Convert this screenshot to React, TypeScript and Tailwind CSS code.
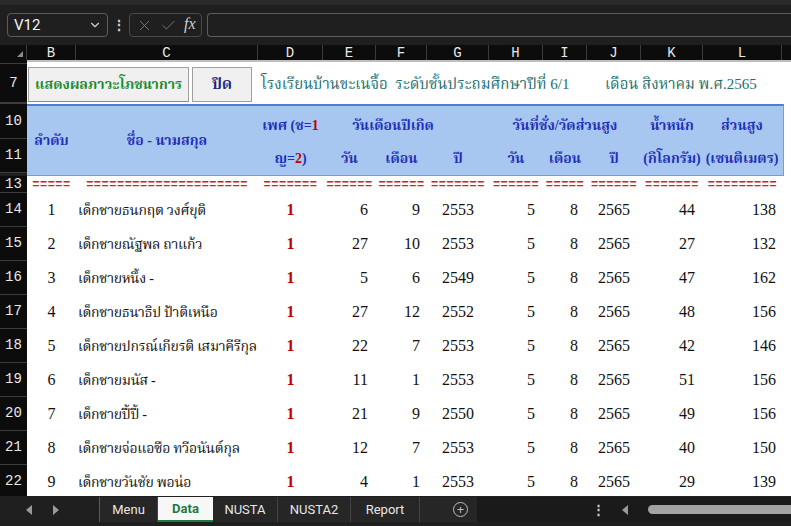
import { Check, ChevronDown, X } from "lucide-react";

const COLS =
  "grid grid-cols-[49px_182px_65px_53px_51px_62px_54px_44px_54px_62px_79px_1fr]";
const HEAD_COLS =
  "grid grid-cols-[49px_182px_65px_53px_51px_62px_54px_44px_54px_62px_78px]";

const SERIF = "font-['Liberation_Serif','Noto_Serif_Thai','Noto_Sans_Thai',serif]";
const MONO = "font-['Liberation_Mono',monospace]";
const UI = "font-['Roboto','Noto_Sans',sans-serif]";

const letters = [
  { l: "B", w: "w-[49px]" },
  { l: "C", w: "w-[182px]" },
  { l: "D", w: "w-[65px]" },
  { l: "E", w: "w-[53px]" },
  { l: "F", w: "w-[51px]" },
  { l: "G", w: "w-[62px]" },
  { l: "H", w: "w-[54px]" },
  { l: "I", w: "w-[44px]" },
  { l: "J", w: "w-[54px]" },
  { l: "K", w: "w-[62px]" },
  { l: "L", w: "w-[79px]" },
];

const students = [
  { no: 1, name: "เด็กชายธนกฤต วงศ์ยุติ", d: 6, m: 9, y: 2553, kg: 44, cm: 138 },
  { no: 2, name: "เด็กชายณัฐพล ถาแก้ว", d: 27, m: 10, y: 2553, kg: 27, cm: 132 },
  { no: 3, name: "เด็กชายหนึ้ง -", d: 5, m: 6, y: 2549, kg: 47, cm: 162 },
  { no: 4, name: "เด็กชายธนาธิป ป้าติเหนือ", d: 27, m: 12, y: 2552, kg: 48, cm: 156 },
  { no: 5, name: "เด็กชายปกรณ์เกียรติ เสมาคีรีกุล", d: 22, m: 7, y: 2553, kg: 42, cm: 146 },
  { no: 6, name: "เด็กชายมนัส -", d: 11, m: 1, y: 2553, kg: 51, cm: 156 },
  { no: 7, name: "เด็กชายปี้ปี้ -", d: 21, m: 9, y: 2550, kg: 49, cm: 156 },
  { no: 8, name: "เด็กชายจ่อแอซือ ทวีอนันต์กุล", d: 12, m: 7, y: 2553, kg: 40, cm: 150 },
  { no: 9, name: "เด็กชายวันชัย พอน่อ", d: 4, m: 1, y: 2553, kg: 29, cm: 139 },
];

const dashes = [5, 21, 7, 6, 6, 7, 6, 5, 6, 7, 9];

function RowNum({ n, h }: { n?: string; h: string }) {
  return (
    <div
      className={`${h} w-[27px] shrink-0 bg-[#0c0c0c] border-b border-[#3c3c3c] flex items-center justify-center ${MONO} text-[14px] text-[#e8e8e8]`}
    >
      {n}
    </div>
  );
}

function TopBar() {
  return (
    <div className="h-[45px] bg-[#1f1f1f] border-t-[5px] border-[#2a2a2a] relative">
      <div className="flex items-center h-[24px] mt-[8px] pl-[7px] gap-0">
        <div className="w-[101px] h-[24px] border border-[#5c5c5c] rounded-[4px] flex items-center justify-between pl-[6px] pr-[5px]">
          <span className={`${UI} text-[15px] text-[#f2f2f2]`}>V12</span>
          <ChevronDown size={14} className="text-[#cfcfcf]" />
        </div>
        <div className="w-[21px] flex justify-center text-[#cfcfcf] text-[14px] font-bold leading-none">⋮</div>
        <div className="w-[73px] h-[24px] border border-[#4a4a4a] rounded-[4px] flex items-center pl-[6px] gap-[7px]">
          <X size={17} strokeWidth={1.3} className="text-[#7a7a7a]" />
          <Check size={17} strokeWidth={1.3} className="text-[#7a7a7a]" />
          <span className="font-['Liberation_Serif',serif] italic text-[16px] text-[#cfcfcf] -mt-[2px]">fx</span>
        </div>
        <div className="ml-[5px] flex-1 h-[24px] border border-[#5c5c5c] rounded-l-[4px] border-r-0" />
      </div>
    </div>
  );
}

function ColumnHeader() {
  return (
    <div className="h-[15px] bg-[#0c0c0c] flex">
      <div className="w-[27px] shrink-0 relative border-r border-[#3c3c3c]">
        <div className="absolute right-[3px] bottom-[3px] w-0 h-0 border-l-[6px] border-l-transparent border-b-[6px] border-b-[#8a8a8a]" />
      </div>
      {letters.map((c) => (
        <div
          key={c.l}
          className={`${c.w} shrink-0 border-r border-[#3c3c3c] flex items-center justify-center ${MONO} text-[14px] leading-none text-[#e8e8e8]`}
        >
          {c.l}
        </div>
      ))}
      <div className="flex-1" />
    </div>
  );
}

function TitleRow() {
  return (
    <div className="flex">
      <RowNum n="7" h="h-[39px]" />
      <div className="flex-1 bg-white flex items-center pl-[1px] pt-[1px]">
        <div className={`w-[161px] h-[35px] bg-[#f0f0f0] border border-[#a0a0a0] border-b-[#8a8a8a] flex items-center justify-center ${SERIF} font-bold text-[14px] text-[#1e8a2f] whitespace-nowrap`}>
          แสดงผลภาวะโภชนาการ
        </div>
        <div className={`ml-[3px] w-[60px] h-[35px] bg-[#f0f0f0] border border-[#a0a0a0] flex items-center justify-center ${SERIF} font-bold text-[15px] text-[#1f237a]`}>
          ปิด
        </div>
        <div className={`ml-[9px] flex items-center ${SERIF} text-[15px] text-[#23706f] whitespace-nowrap`}>
          <span className="w-[344px]">โรงเรียนบ้านขะเนจื้อ&nbsp;&nbsp;ระดับชั้นประถมศึกษาปีที่ 6/1</span>
          <span>เดือน สิงหาคม พ.ศ.2565</span>
        </div>
      </div>
    </div>
  );
}

function HeaderBlock() {
  const t = `${SERIF} font-bold text-[14px] text-[#1f2fb8] whitespace-nowrap flex items-center justify-center`;
  const red = "text-[#c00000]";
  return (
    <div className="flex">
      <div className="flex flex-col">
        <RowNum n="10" h="h-[35px]" />
        <RowNum n="11" h="h-[34px]" />
      </div>
      <div className="flex-1 bg-white flex">
        <div className={`${HEAD_COLS} grid-rows-[35px_34px] w-[757px] bg-[#a7c7f1] border-t-2 border-t-[#4b7fd6] border-b border-r border-[#7f9cc4]`}>
          <div className={`${t} row-span-2`}>ลำดับ</div>
          <div className={`${t} row-span-2`}>ชื่อ - นามสกุล</div>
          <div className={`${t} pt-[4px]`}>
            เพศ (ช=<span className={red}>1</span>
          </div>
          <div className={`${t} col-span-3 pt-[4px] pr-[26px]`}>วันเดือนปีเกิด</div>
          <div className={`${t} col-span-3 pt-[4px]`}>วันที่ชั่ง/วัดส่วนสูง</div>
          <div className={`${t} pt-[4px]`}>น้ำหนัก</div>
          <div className={`${t} pt-[4px]`}>ส่วนสูง</div>
          <div className={t}>
            ญ=<span className={red}>2</span>)
          </div>
          <div className={t}>วัน</div>
          <div className={t}>เดือน</div>
          <div className={t}>ปี</div>
          <div className={t}>วัน</div>
          <div className={t}>เดือน</div>
          <div className={t}>ปี</div>
          <div className={t}>(กิโลกรัม)</div>
          <div className={t}>(เซนติเมตร)</div>
        </div>
      </div>
    </div>
  );
}

function DashRow() {
  return (
    <div className="flex">
      <RowNum n="13" h="h-[17px]" />
      <div className={`flex-1 bg-white ${COLS}`}>
        {dashes.map((n, i) => (
          <div
            key={i}
            className={`flex items-center justify-center overflow-hidden ${MONO} font-bold text-[12px] leading-none tracking-[0.5px] text-[#d02020]`}
          >
            {"=".repeat(n)}
          </div>
        ))}
      </div>
    </div>
  );
}

function DataRow({ s }: { s: (typeof students)[number] }) {
  const base = `flex items-center ${SERIF}`;
  const c = `${base} text-[16px] text-[#111]`;
  return (
    <div className="flex">
      <RowNum n={String(s.no + 13)} h="h-[34px]" />
      <div className={`flex-1 bg-white ${COLS}`}>
        <div className={`${c} justify-center`}>{s.no}</div>
        <div className={`${base} text-[14px] text-[#111] pl-[2px] whitespace-nowrap tracking-[-0.3px]`}>{s.name}</div>
        <div className={`${base} text-[16px] justify-center font-bold text-[#c00000]`}>1</div>
        <div className={`${c} justify-end pr-[8px]`}>{s.d}</div>
        <div className={`${c} justify-end pr-[7px]`}>{s.m}</div>
        <div className={`${c} justify-center`}>{s.y}</div>
        <div className={`${c} justify-end pr-[8px]`}>5</div>
        <div className={`${c} justify-end pr-[9px]`}>8</div>
        <div className={`${c} justify-center`}>2565</div>
        <div className={`${c} justify-end pr-[8px]`}>{s.kg}</div>
        <div className={`${c} justify-end pr-[6px]`}>{s.cm}</div>
        <div />
      </div>
    </div>
  );
}

function Tri({ dir }: { dir: "l" | "r" }) {
  return dir === "l" ? (
    <div className="w-0 h-0 border-y-[5px] border-y-transparent border-r-[6px] border-r-[#9a9a9a]" />
  ) : (
    <div className="w-0 h-0 border-y-[5px] border-y-transparent border-l-[6px] border-l-[#9a9a9a]" />
  );
}

function Tabs() {
  const tab = `h-[25px] flex items-center justify-center ${UI} text-[13px] text-[#e6e6e6] bg-[#262626] border-r border-[#444]`;
  return (
    <div className="h-[30px] bg-[#1f1f1f] flex pt-[1px]">
      <div className="w-[100px] h-[25px] flex items-center border-r border-[#5a5a5a]">
        <div className="ml-[26px]">
          <Tri dir="l" />
        </div>
        <div className="ml-[21px]">
          <Tri dir="r" />
        </div>
      </div>
      <div className={`${tab} w-[58px]`}>Menu</div>
      <div className={`h-[25px] w-[55px] flex items-center justify-center ${UI} text-[13px] font-bold text-[#1d7a45] bg-[#f7f7f7] border-b-2 border-[#1d7a45]`}>
        Data
      </div>
      <div className={`${tab} w-[65px]`}>NUSTA</div>
      <div className={`${tab} w-[73px]`}>NUSTA2</div>
      <div className={`${tab} w-[69px]`}>Report</div>
      <div className="w-[57px] h-[25px] bg-[#262626] flex items-center justify-end pr-[9px]">
        <div className="w-[15px] h-[15px] rounded-full border-[1.5px] border-[#bdbdbd] flex items-center justify-center text-[#bdbdbd] text-[13px] leading-none">
          +
        </div>
      </div>
      <div className="flex-1 h-[25px] bg-[#1a1a1a] flex items-center">
        <span className="ml-[115px] text-[#cfcfcf] text-[13px] font-bold leading-none">⋮</span>
        <div className="ml-[17px]">
          <Tri dir="l" />
        </div>
        <div className="ml-[20px] flex-1 h-[9px] rounded-l-full bg-[#a3a3a3]" />
      </div>
    </div>
  );
}

export default function App() {
  return (
    <div className="w-[791px] h-[526px] overflow-hidden bg-[#1f1f1f] flex flex-col">
      <TopBar />
      <ColumnHeader />
      <div className="h-[286px] flex-1 flex flex-col overflow-hidden">
        <div className="flex">
          <RowNum h="h-[4px]" />
          <div className="flex-1 bg-white border-t-2 border-[#bfbfbf]" />
        </div>
        <TitleRow />
        <div className="flex">
          <RowNum h="h-[1px]" />
          <div className="flex-1 bg-white" />
        </div>
        <HeaderBlock />
        <DashRow />
        {students.map((s) => (
          <DataRow key={s.no} s={s} />
        ))}
      </div>
      <Tabs />
    </div>
  );
}
